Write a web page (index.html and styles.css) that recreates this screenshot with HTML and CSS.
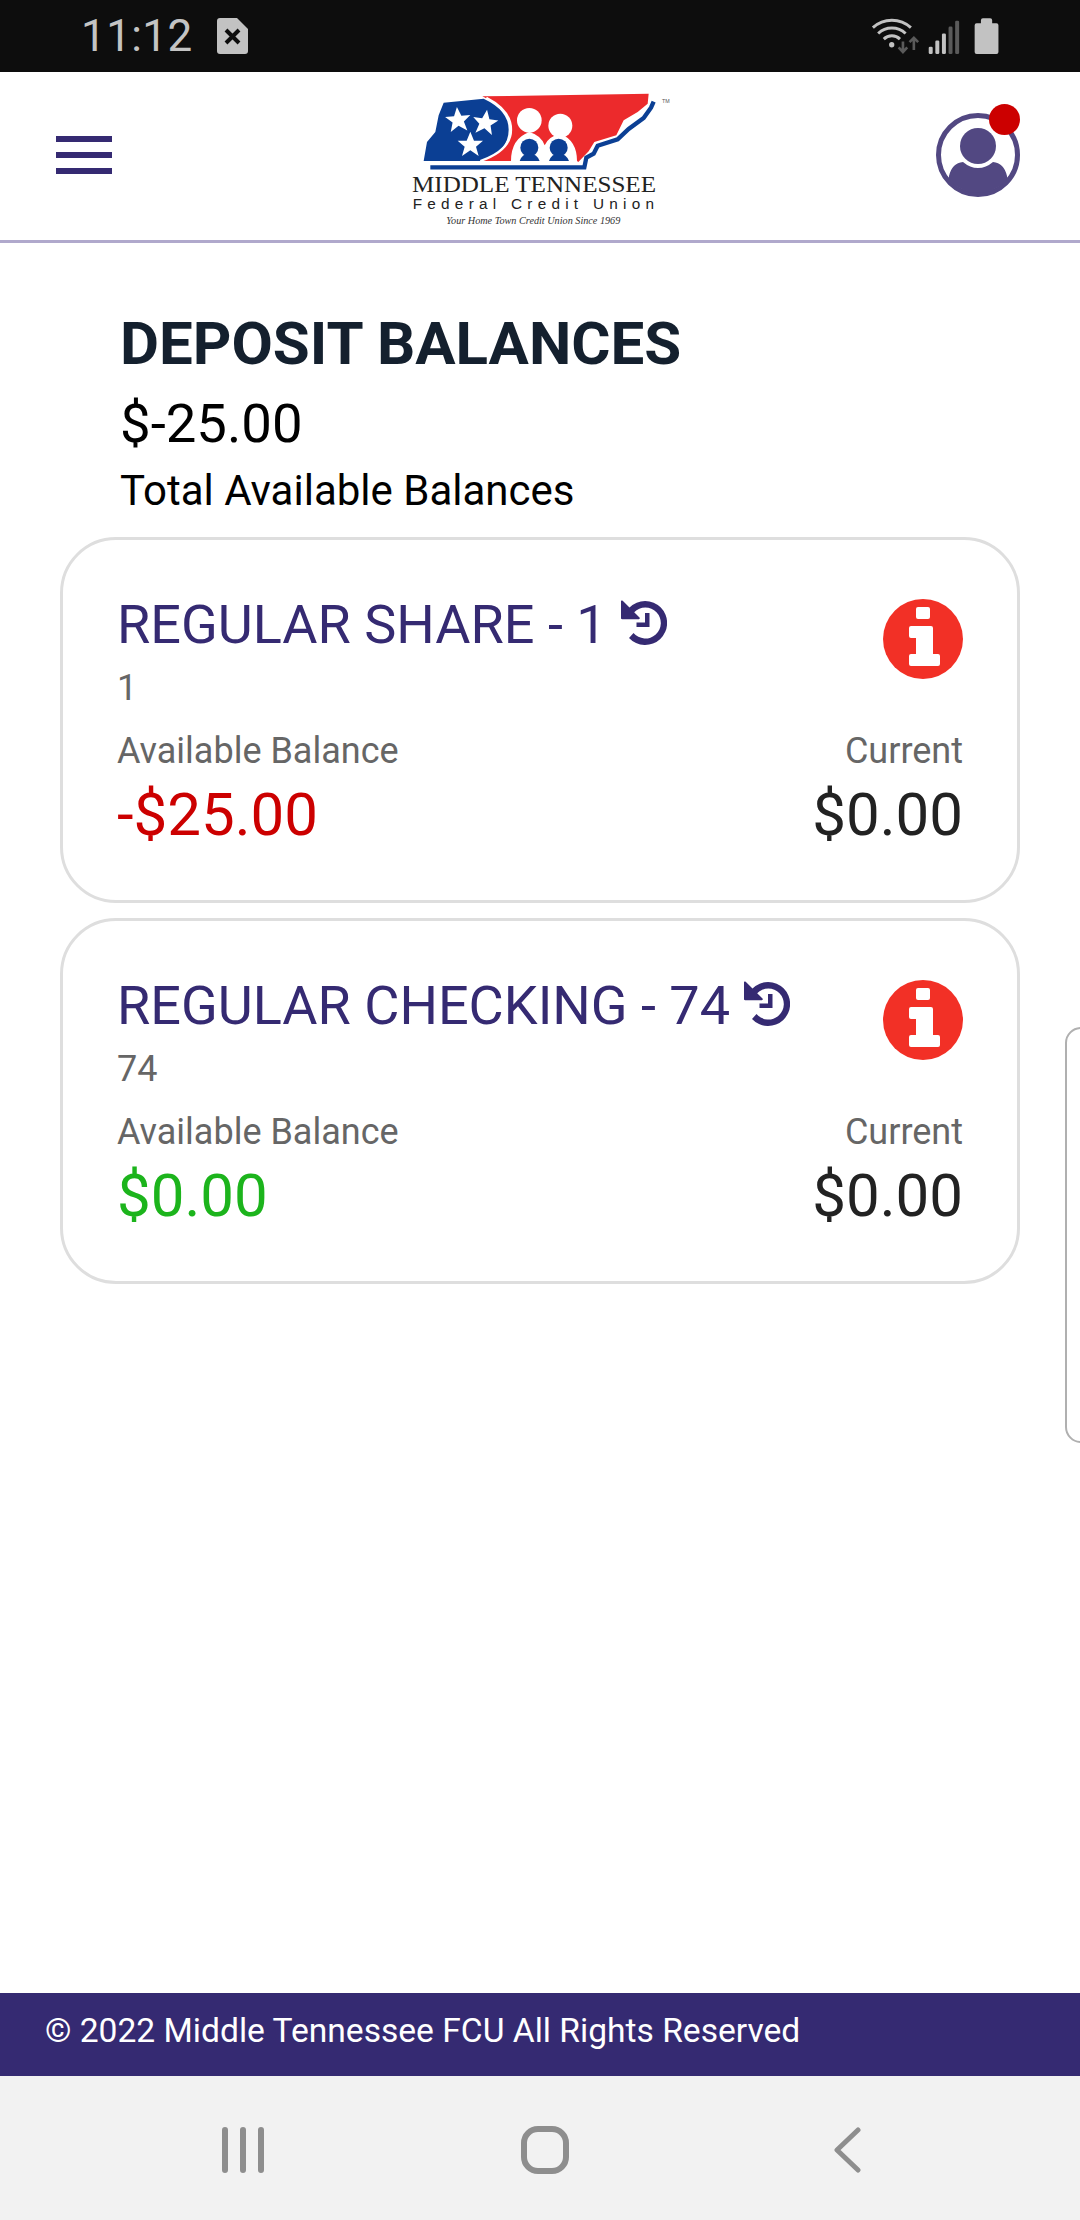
FILE: index.html
```html
<!DOCTYPE html>
<html lang="en">

<head>
    <meta charset="UTF-8">
    <title>Deposit Balances</title>
    <link rel="stylesheet" href="styles.css">
</head>

<body>
    <div class="page">
        <div class="status-bar">
            <div class="status-left">
                <span class="time">11:12</span>
                <svg class="sim-icon" viewBox="0 0 31 36" width="31" height="36">
                    <path d="M3 0h17l11 11v22a3 3 0 0 1-3 3H3a3 3 0 0 1-3-3V3a3 3 0 0 1 3-3z" fill="#c2c2c2"/>
                    <path d="M9 12l13 13M22 12L9 25" stroke="#0d0d0d" stroke-width="4" fill="none"/>
                </svg>
            </div>
            <svg class="status-icons" viewBox="270 50 390 115" width="130" height="38">
                <path d="M277 82a85 85 0 0 1 115 0" stroke="#c2c2c2" stroke-width="9" fill="none"/>
                <path d="M293 100a60 60 0 0 1 83 0" stroke="#c2c2c2" stroke-width="9" fill="none"/>
                <path d="M310 117a35 35 0 0 1 49 0" stroke="#c2c2c2" stroke-width="9" fill="none"/>
                <circle cx="334" cy="134" r="8" fill="#c2c2c2"/>
                <path d="M368 124v28M355 142l13 14 13-14" stroke="#5a5a5a" stroke-width="8" fill="none"/>
                <path d="M401 150v-32M388 126l13-13 13 13" stroke="#5a5a5a" stroke-width="8" fill="none"/>
                <rect x="446" y="140" width="12" height="22" rx="4" fill="#c2c2c2"/>
                <rect x="466" y="121" width="12" height="41" rx="4" fill="#c2c2c2"/>
                <rect x="486" y="100" width="12" height="62" rx="4" fill="#c2c2c2"/>
                <rect x="506" y="79" width="12" height="83" rx="4" fill="#5a5a5a"/>
                <rect x="526" y="61" width="12" height="101" rx="4" fill="#5a5a5a"/>
                <path d="M604 60a6 6 0 0 1 6-6h22a6 6 0 0 1 6 6v9h13a6 6 0 0 1 6 6v81a6 6 0 0 1-6 6h-60a6 6 0 0 1-6-6V75a6 6 0 0 1 6-6h13z" fill="#c2c2c2"/>
            </svg>
        </div>

        <div class="header">
            <div class="menu-btn"><span></span><span></span><span></span></div>
            <svg class="logo" viewBox="95 65 780 402" width="260" height="134">
                <path d="M190 97L310 85Q385 120 385 178Q385 245 300 272H130L140 215L165 185L175 135z" fill="#0b3f94"/>
                <path d="M306 78L805 70L802 100L772 125L730 150L708 195L642 215L625 243L594 275L590 272H300Q392 240 392 178Q392 120 306 78z" fill="#ec2a2c"/>
                <path d="M300 272Q392 240 392 178Q392 120 318 82" fill="none" stroke="#fff" stroke-width="7"/>
                <path d="M392 272Q392 205 447 185Q482 195 493 225Q504 198 540 190Q590 210 590 272z" fill="#fff"/>
                <circle cx="447" cy="150" r="37" fill="#fff"/>
                <circle cx="540" cy="166" r="36" fill="#fff"/>
                <circle cx="447" cy="232" r="27" fill="#0b3f94"/>
                <circle cx="535" cy="232" r="27" fill="#0b3f94"/>
                <path d="M418 272Q425 250 447 250Q470 250 478 272z" fill="#0b3f94"/>
                <path d="M506 272Q513 250 535 250Q558 250 566 272z" fill="#0b3f94"/>
                <polygon points="233,110 244,137 271,137 250,155 258,183 233,166 208,183 216,155 195,137 222,137" fill="#fff" transform="rotate(-5 233 147)"/>
                <polygon points="315,118 326,145 353,145 332,163 340,191 315,174 290,191 298,163 277,145 304,145" fill="#fff" transform="rotate(8 315 155)"/>
                <polygon points="270,184 281,211 308,211 287,229 295,257 270,240 245,257 253,229 232,211 259,211" fill="#fff"/>
                <path d="M150 291H612L618 262L640 250L652 226L712 207L745 176L790 143L812 112L820 94" fill="none" stroke="#0b3f94" stroke-width="13"/>
                <text class="logo-tm" x="845" y="98">TM</text>
                <text class="logo-name" x="95" y="365" textLength="732" lengthAdjust="spacingAndGlyphs">MIDDLE TENNESSEE</text>
                <text class="logo-sub" x="97" y="417" textLength="724">Federal Credit Union</text>
                <text class="logo-tag" x="198" y="462" textLength="522" lengthAdjust="spacingAndGlyphs">Your Home Town Credit Union Since 1969</text>
            </svg>
            <div class="profile">
                <svg viewBox="0 0 84 84" width="84" height="84">
                    <defs>
                        <clipPath id="ring"><circle cx="42" cy="42" r="38"/></clipPath>
                    </defs>
                    <circle cx="42" cy="42" r="39.5" fill="#fff" stroke="#524882" stroke-width="5"/>
                    <circle cx="42" cy="33" r="18" fill="#524882"/>
                    <path d="M13 63Q16 50 27 49Q34 55 42 55Q50 55 57 49Q68 50 71 63L72 84H12z" fill="#524882" clip-path="url(#ring)"/>
                </svg>
                <span class="profile-dot"></span>
            </div>
        </div>

        <div class="main">
            <div class="summary">
                <h2>DEPOSIT BALANCES</h2>
                <div class="total">$-25.00</div>
                <div class="total-label">Total Available Balances</div>
            </div>

            <div class="card">
                <div class="card-head">
                    <div>
                        <div class="acct-title">
                            <span>REGULAR SHARE - 1</span>
                            <svg class="history-icon" viewBox="0 0 46 47" width="46" height="47"><use href="#history"/></svg>
                        </div>
                        <div class="acct-num">1</div>
                    </div>
                    <svg class="info-icon" viewBox="0 0 80 80" width="80" height="80"><use href="#info"/></svg>
                </div>
                <div class="card-foot">
                    <div>
                        <div class="bal-label">Available Balance</div>
                        <div class="amount neg">-$25.00</div>
                    </div>
                    <div class="right">
                        <div class="bal-label">Current</div>
                        <div class="amount">$0.00</div>
                    </div>
                </div>
            </div>

            <div class="card">
                <div class="card-head">
                    <div>
                        <div class="acct-title">
                            <span>REGULAR CHECKING - 74</span>
                            <svg class="history-icon" viewBox="0 0 46 47" width="46" height="47"><use href="#history"/></svg>
                        </div>
                        <div class="acct-num">74</div>
                    </div>
                    <svg class="info-icon" viewBox="0 0 80 80" width="80" height="80"><use href="#info"/></svg>
                </div>
                <div class="card-foot">
                    <div>
                        <div class="bal-label">Available Balance</div>
                        <div class="amount pos">$0.00</div>
                    </div>
                    <div class="right">
                        <div class="bal-label">Current</div>
                        <div class="amount">$0.00</div>
                    </div>
                </div>
            </div>

            <div class="side-tab"></div>
        </div>

        <div class="footer">© 2022 Middle Tennessee FCU All Rights Reserved</div>

        <div class="nav-bar">
            <svg viewBox="0 0 42 46" width="42" height="46">
                <path d="M3 3v40M21 3v40M39 3v40" stroke="#8e8e8e" stroke-width="6" stroke-linecap="round"/>
            </svg>
            <svg viewBox="0 0 48 48" width="48" height="48">
                <rect x="3" y="3" width="42" height="42" rx="14" fill="none" stroke="#8e8e8e" stroke-width="6"/>
            </svg>
            <svg viewBox="0 0 28 46" width="28" height="46">
                <path d="M25 3L4 23l21 20" fill="none" stroke="#8e8e8e" stroke-width="5" stroke-linecap="round" stroke-linejoin="round"/>
            </svg>
        </div>
    </div>

    <svg class="icon-defs" width="0" height="0">
        <symbol id="history" viewBox="0 0 46 47">
            <path d="M8.500 8.500A22 22 0 1 1 8 39l4.500-5a15.500 15.500 0 1 0 .7-20.800l5.300 5.300a1 1 0 0 1-.7 1.700H1.500A1.500 1.500 0 0 1 0 19.500V2.500a1 1 0 0 1 1.700-.7z" fill="#352a72"/>
            <path d="M24 14h4.500v14H15.500v-4.500H24z" fill="#352a72"/>
        </symbol>
        <symbol id="info" viewBox="0 0 80 80">
            <circle cx="40" cy="40" r="40" fill="#f23026"/>
            <rect x="33" y="8" width="14" height="12" rx="2" fill="#fff"/>
            <path d="M28 27h20a2 2 0 0 1 2 2v26h5a2 2 0 0 1 2 2v8a2 2 0 0 1-2 2H28a2 2 0 0 1-2-2v-8a2 2 0 0 1 2-2h5V39h-5a2 2 0 0 1-2-2v-8a2 2 0 0 1 2-2z" fill="#fff"/>
        </symbol>
    </svg>
</body>

</html>
```

FILE: styles.css
```css
* {
    box-sizing: border-box;
}

body {
    margin: 0;
    font-family: Roboto, "Liberation Sans", sans-serif;
    background: #fff;
}

.page {
    width: 1080px;
    height: 2220px;
    display: flex;
    flex-direction: column;
    overflow: hidden;
}

.status-bar {
    height: 72px;
    background: #0d0d0d;
    display: flex;
    justify-content: space-between;
    align-items: center;
    padding: 0 80px 0 81px;
}

.status-left {
    display: flex;
    align-items: center;
    gap: 24px;
}

.time {
    color: #c4c4c4;
    font-size: 44px;
    line-height: 72px;
    letter-spacing: 0.4px;
}

.header {
    height: 171px;
    background: #fff;
    border-bottom: 3px solid #b0a9cc;
    display: flex;
    align-items: flex-start;
    justify-content: space-between;
    padding: 0 60px 0 56px;
}

.menu-btn {
    width: 56px;
    margin-top: 64px;
    display: flex;
    flex-direction: column;
    gap: 10px;
}

.menu-btn span {
    height: 6px;
    background: #352a72;
}

.logo {
    margin-top: 20px;
    margin-left: 36px;
}

.logo-tm {
    font-family: "Liberation Sans", sans-serif;
    font-size: 16px;
    fill: #555;
}

.logo-name {
    font-family: "Liberation Serif", serif;
    font-size: 68px;
    fill: #222;
}

.logo-sub {
    font-family: "Liberation Sans", sans-serif;
    font-size: 46px;
    fill: #222;
}

.logo-tag {
    font-family: "Liberation Serif", serif;
    font-style: italic;
    font-size: 29px;
    fill: #333;
}

.profile {
    position: relative;
    width: 84px;
    height: 84px;
    margin-top: 41px;
}

.profile-dot {
    position: absolute;
    top: -9px;
    right: 0;
    width: 31px;
    height: 31px;
    border-radius: 50%;
    background: #cc0000;
}

.main {
    flex: 1;
    position: relative;
    padding: 0 60px;
}

.summary {
    padding: 71px 0 21px 60px;
    color: #000;
}

h2 {
    margin: 0;
    font-size: 60px;
    line-height: 60px;
    font-weight: 700;
    color: #14202e;
}

.total {
    font-size: 54.500px;
    line-height: 60px;
    margin-top: 19px;
}

.total-label {
    font-size: 42px;
    line-height: 50px;
    margin-top: 13px;
}

.card {
    height: 366px;
    border: 3px solid #dedede;
    border-radius: 56px;
    padding: 55px 54px 0 54px;
    margin-bottom: 15px;
}

.card-head {
    display: flex;
    justify-content: space-between;
    align-items: flex-start;
}

.acct-title {
    display: flex;
    align-items: center;
    gap: 14px;
    font-size: 54px;
    line-height: 60px;
    color: #352a72;
}

.history-icon {
    margin-top: -6px;
}

.acct-num {
    font-size: 36px;
    line-height: 40px;
    color: #666;
    margin-top: 13px;
}

.info-icon {
    margin-top: 4px;
}

.card-foot {
    display: flex;
    justify-content: space-between;
    margin-top: 21px;
}

.right {
    text-align: right;
}

.bal-label {
    font-size: 36px;
    line-height: 44px;
    color: #666;
}

.amount {
    font-size: 60px;
    line-height: 70px;
    margin-top: 7px;
    color: #222;
}

.neg {
    color: #cc0000;
}

.pos {
    color: #1cb41c;
}

.side-tab {
    position: absolute;
    left: 1065px;
    top: 784px;
    width: 40px;
    height: 416px;
    border: 2px solid #b0b0b0;
    border-radius: 16px;
}

.footer {
    height: 83px;
    background: #352a72;
    color: #fff;
    font-size: 33.600px;
    line-height: 76px;
    padding-left: 45px;
}

.nav-bar {
    height: 144px;
    background: #f2f2f2;
    display: flex;
    align-items: center;
    padding: 4px 0 0 222px;
}

.nav-bar svg:nth-child(2) {
    margin-left: 257px;
}

.nav-bar svg:nth-child(3) {
    margin-left: 264px;
}

.icon-defs {
    position: absolute;
}
```
